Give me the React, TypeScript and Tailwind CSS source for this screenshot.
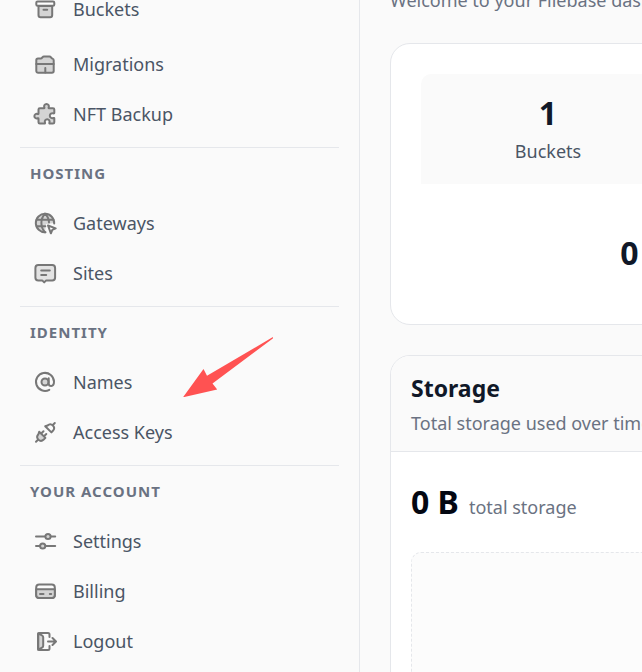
import type { ReactNode } from "react";

type NavItem = { label: string; icon: ReactNode };
type NavGroup = { title: string; items: NavItem[] };

const storageItems: NavItem[] = [
  {
    label: "Migrations",
    icon: (
      <>
        <path
          className="fill-[#d4d4d4]"
          d="M3.300 19V8.300c0-1 .7-1.800 1.700-1.800h2.800c.6 0 1-.3 1.400-.8l.4-.5c.3-.5.800-.7 1.400-.7h5.500c.6 0 1.100.3 1.500.8l.4.500c.4.500.7.700 1.100.8.700.2 1.200.9 1.200 1.700V19c0 1-.8 1.800-1.800 1.800H5.100c-1 0-1.800-.8-1.800-1.800z"
        />
        <path d="M3.300 12h17.400M12.300 16v4.500" />
      </>
    ),
  },
  {
    label: "NFT Backup",
    icon: (
      <path
        className="fill-[#d4d4d4]"
        d="M6.800 6.300H11c.6 0 .5-.6.3-1a2.400 2.400 0 1 1 4.400 0c-.2.400-.3 1 .3 1h4c.9 0 1.300.500 1.300 1.300v3.200c0 .7-.5.8-1 .6a2.500 2.500 0 1 0 0 4.600c.5-.2 1 0 1 .6v3.600c0 .9-.5 1.300-1.300 1.300h-3c-.7 0-.9-.5-.6-1a2.400 2.400 0 1 0-4.400 0c.2.500 0 1-.6 1H6.800c-.9 0-1.300-.5-1.300-1.300v-3.400c0-.6-.5-.7-1-.5a2.300 2.300 0 1 1 0-4.300c.5.2 1 .1 1-.5V7.600c0-.8.5-1.300 1.300-1.300z"
      />
    ),
  },
];

const groups: NavGroup[] = [
  {
    title: "Hosting",
    items: [
      {
        label: "Gateways",
        icon: (
          <>
            <path
              stroke="none"
              className="fill-[#d4d4d4]"
              d="M12 21.200A9.200 9.200 0 1 1 21.200 12L13 13z"
            />
            <path d="M12.500 21.200A9.200 9.200 0 1 1 21.200 12.500" />
            <path d="M12 2.800c-4.800 5-4.800 13.500 0 18.400M12 2.800c2.600 2.400 4 5.700 4 8.700M3.700 8.800h16.600M3.700 15.300h8.600" />
            <path className="fill-white" d="m15 14.500 7.700 2.900-3.400 1.400-1.400 3.500z" />
          </>
        ),
      },
      {
        label: "Sites",
        icon: (
          <>
            <path
              className="fill-[#e3e3e3]"
              d="M5.300 3.900h13.900c1.700 0 2.900 1.300 2.900 3v9.500c0 1.700-1.200 3-2.900 3h-6l-2 2-2-2H5.300c-1.700 0-2.900-1.300-2.900-3V6.900c0-1.700 1.200-3 2.900-3z"
            />
            <path d="M8.200 9.500h8.600M8.200 14h5" />
          </>
        ),
      },
    ],
  },
  {
    title: "Identity",
    items: [
      {
        label: "Names",
        icon: (
          <>
            <circle cx="12" cy="12" r="3.500" className="fill-[#d4d4d4]" />
            <path d="M15.700 8.300v5.200c0 1.500 1 2.500 2.500 2.500 2-.2 2.800-2 2.800-4.200a9 9 0 1 0-4.700 8" />
          </>
        ),
      },
      {
        label: "Access Keys",
        icon: (
          <>
            <path d="m19.800 5 2-2M3 21.800l2-2M8.200 13.500l2.300-2.300M11 16.300l2.300-2.300" />
            <path
              className="fill-[#d4d4d4]"
              d="m6.200 11.700 6.200 6.200-1.700 1.700c-1.600 1.500-3.800 1.500-5.300 0s-1.500-3.700 0-5.300z"
            />
            <path d="m12.200 6.200 6.200 6.200 1.500-1.600c1.500-1.600 1.500-3.800 0-5.300s-3.700-1.500-5.300 0z" />
          </>
        ),
      },
    ],
  },
  {
    title: "Your Account",
    items: [
      {
        label: "Settings",
        icon: (
          <>
            <path d="M3 7.500h9.300M17.700 7.500h4.500M3 17h4M12.400 17h9.800" />
            <circle cx="15" cy="7.500" r="2.600" className="fill-[#d4d4d4]" />
            <circle cx="9.700" cy="17" r="2.600" className="fill-[#d4d4d4]" />
          </>
        ),
      },
      {
        label: "Billing",
        icon: (
          <>
            <rect x="3.200" y="5.500" width="18.600" height="13.500" rx="3" />
            <path
              className="fill-[#d4d4d4]"
              d="M3.200 10.300h18.600v5.800c0 1.700-1.200 2.900-2.900 2.900H6.100c-1.700 0-2.900-1.200-2.900-2.900z"
            />
            <path d="M7 15h3.500M16.800 15h1.400" />
          </>
        ),
      },
      {
        label: "Logout",
        icon: (
          <>
            <path d="M16.500 8V5.500c0-1-.6-1.500-1.500-1.500H6.500C5.600 4 5 4.500 5 5.500v14c0 1 .6 1.500 1.500 1.500H15c.9 0 1.500-.5 1.500-1.500V17" />
            <path
              className="fill-[#d4d4d4]"
              d="M5.300 4.300 9 6.300c.8.400 1.200 1 1.200 1.900v8.600c0 .9-.4 1.500-1.200 1.900l-3.700 2z"
            />
            <path d="M15 12.500h7.700M19.500 9l3.500 3.500-3.500 3.500" />
          </>
        ),
      },
    ],
  },
];

const bucketsItem: NavItem = {
  label: "Buckets",
  icon: (
    <>
      <path
        className="fill-[#d4d4d4]"
        d="M5.500 9h13.700v9c0 1.200-.8 2.200-2.100 2.200H7.600c-1.300 0-2.100-1-2.100-2.200z"
      />
      <rect x="3.300" y="4.500" width="18" height="4.300" rx="1.300" className="fill-white" />
      <path d="M10.500 12.800h3.700" />
    </>
  ),
};

function NavLink({ item }: { item: NavItem }) {
  return (
    <li>
      <a
        href="#"
        className="flex h-[50px] items-center gap-4 pl-[13px] text-[18px] text-gray-600"
      >
        <svg
          aria-hidden="true"
          viewBox="0 0 24 24"
          className="size-6 shrink-0 fill-none stroke-[#777777] stroke-2"
          strokeLinecap="round"
          strokeLinejoin="round"
        >
          {item.icon}
        </svg>
        {item.label}
      </a>
    </li>
  );
}

function Sidebar() {
  return (
    <nav className="-mt-4 w-[360px] shrink-0 border-r border-gray-200 px-5">
      <ul className="mb-[5px]">
        <NavLink item={bucketsItem} />
      </ul>
      <ul className="mb-2">
        {storageItems.map((item) => (
          <NavLink key={item.label} item={item} />
        ))}
      </ul>
      {groups.map((group) => (
        <section key={group.title} className="border-t border-gray-200 pb-2">
          <h2 className="flex h-[50px] items-center pl-[10px] text-[15px] font-bold tracking-[1px] text-gray-500 uppercase">
            {group.title}
          </h2>
          <ul>
            {group.items.map((item) => (
              <NavLink key={item.label} item={item} />
            ))}
          </ul>
        </section>
      ))}
    </nav>
  );
}

function Stats() {
  return (
    <section className="rounded-[20px] border border-gray-200 bg-white p-[30px]">
      <dl className="grid grid-cols-2 text-center">
        <div className="flex h-[110px] flex-col-reverse justify-center gap-1 rounded-tl-[10px] bg-[#fafafa]">
          <dt className="text-[18px] leading-7 text-gray-600">Buckets</dt>
          <dd className="text-[32px] leading-10 font-bold text-gray-900">1</dd>
        </div>
        <div className="rounded-tr-[10px] bg-[#fafafa]" />
        <div className="col-span-2 flex h-[110px] items-end justify-center pb-5">
          <dd className="text-[32px] leading-10 font-bold text-gray-900">
            0 <span className="text-[30px]">Bytes</span>
          </dd>
        </div>
      </dl>
    </section>
  );
}

function Storage() {
  return (
    <section className="overflow-hidden rounded-[20px] border border-gray-200 bg-white">
      <header className="border-b border-gray-200 bg-[#fafafa] px-5 pt-4 pb-[14px]">
        <h2 className="text-[23px] leading-8 font-bold text-gray-900">Storage</h2>
        <p className="mt-[5px] text-[18px] leading-7 text-gray-500">
          Total storage used over time
        </p>
      </header>
      <div className="p-5">
        <p className="flex items-baseline gap-2.5 pt-[10px] text-[18px] text-gray-500">
          <strong className="text-[32px] leading-10 font-bold text-gray-950">0 B</strong>
          total storage
        </p>
        <div className="mt-[30px] h-[300px] rounded-[10px] border border-dashed border-gray-200 bg-[#fcfcfc]" />
      </div>
    </section>
  );
}

export default function App() {
  return (
    <div className="relative flex h-screen overflow-hidden bg-[#fafafa] font-['Noto_Sans',sans-serif]">
      <Sidebar />
      <main className="min-w-[630px] flex-1 px-[30px]">
        <p className="-mt-[14px] mb-[29px] text-[18px] leading-7 text-gray-500">
          Welcome to your Filebase dashboard
        </p>
        <div className="grid gap-[30px]">
          <Stats />
          <Storage />
        </div>
      </main>

      {/* pointer to the access keys entry */}
      <svg
        aria-hidden="true"
        viewBox="0 0 90 60"
        className="pointer-events-none absolute top-[337px] left-[183px] h-[60px] w-[90px] fill-[#ff5252]"
      >
        <path d="M0 60.300 20.500 32l3.500 6.700L89.500.3c.8-.3 1 .7.3 1.200L29.500 46.500l4.700 6z" />
      </svg>
    </div>
  );
}
